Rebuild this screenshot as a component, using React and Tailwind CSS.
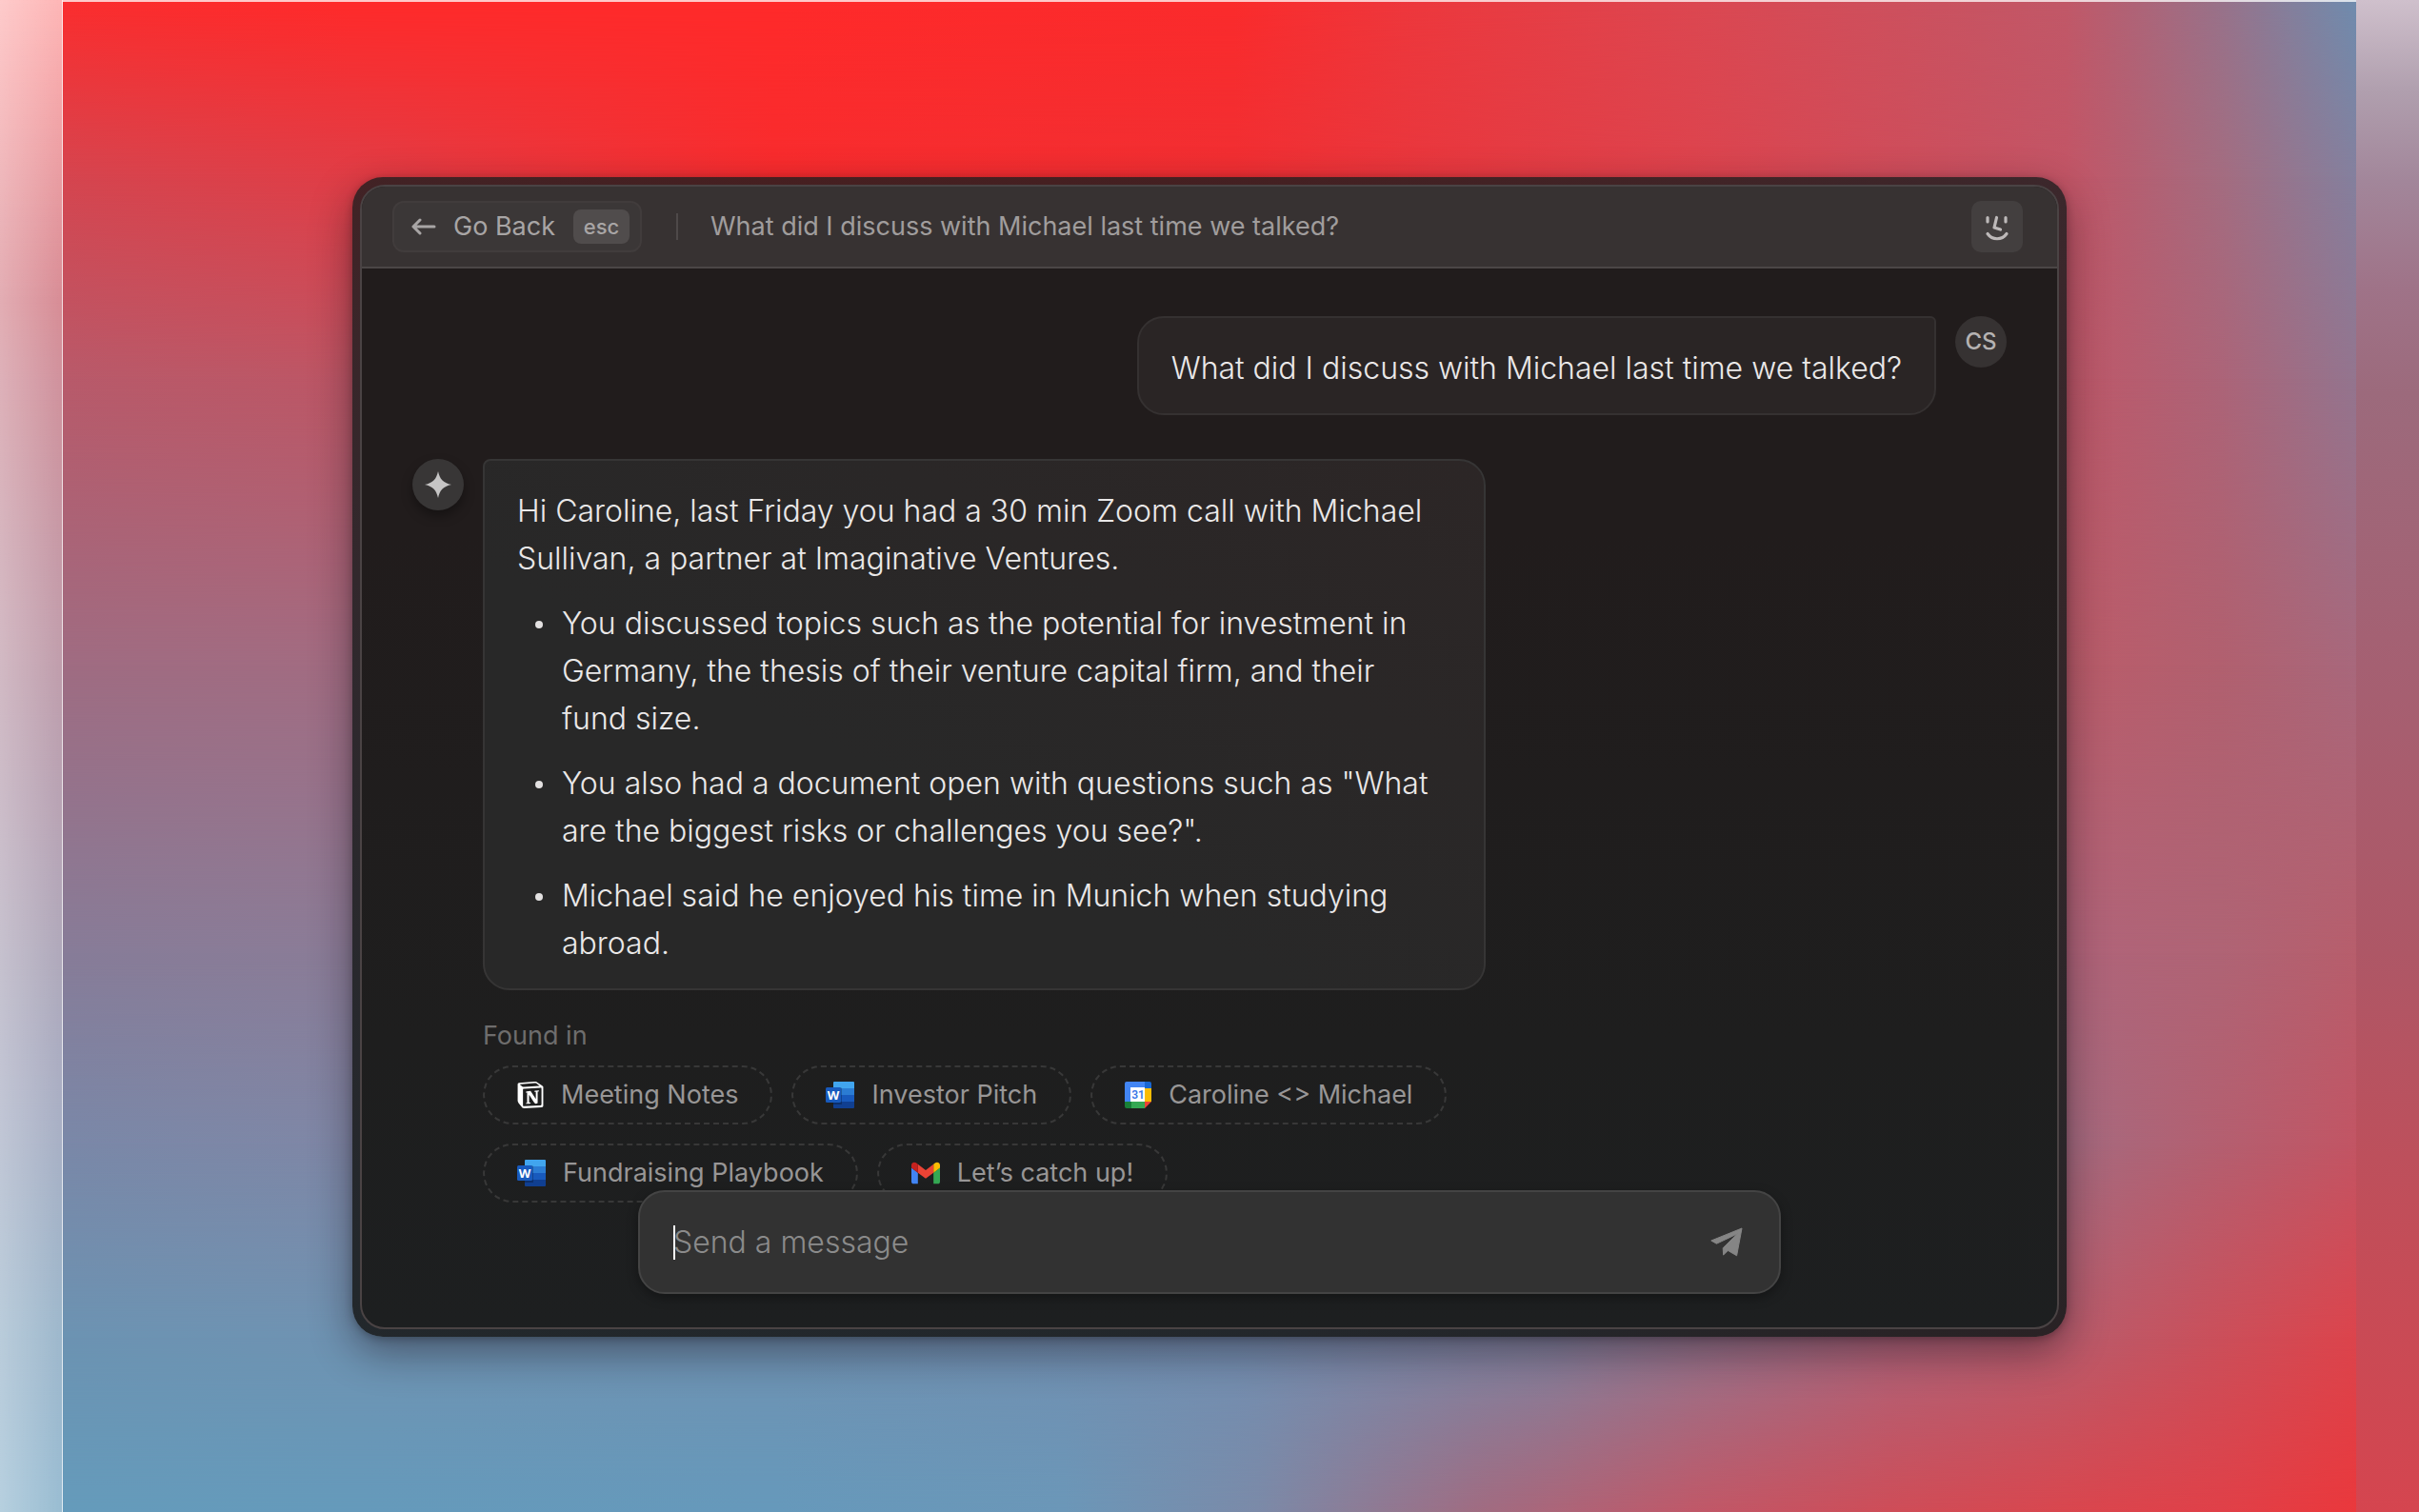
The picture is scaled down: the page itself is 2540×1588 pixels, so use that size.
import { useState } from "react";
import { SiNotion } from "react-icons/si";

const question = "What did I discuss with Michael last time we talked?";

const bullets = [
  "You discussed topics such as the potential for investment in Germany, the thesis of their venture capital firm, and their fund size.",
  'You also had a document open with questions such as "What are the biggest risks or challenges you see?".',
  "Michael said he enjoyed his time in Munich when studying abroad.",
];

const sources = [
  { name: "Meeting Notes", icon: NotionIcon },
  { name: "Investor Pitch", icon: WordIcon },
  { name: "Caroline <> Michael", icon: CalendarIcon },
  { name: "Fundraising Playbook", icon: WordIcon },
  { name: "Let’s catch up!", icon: GmailIcon },
];

function NotionIcon() {
  return <SiNotion className="w-7 h-[30px] text-white" aria-hidden="true" />;
}

function WordIcon() {
  return (
    <svg className="w-[30px] h-7" viewBox="0 0 30 28" aria-hidden="true">
      <path d="M9 0h20a1 1 0 0 1 1 1v6H8V1a1 1 0 0 1 1-1z" fill="#41a5ee" />
      <path d="M8 7h22v7H8z" fill="#2b7cd3" />
      <path d="M8 14h22v7H8z" fill="#185abd" />
      <path d="M8 21h22v6a1 1 0 0 1-1 1H9a1 1 0 0 1-1-1z" fill="#103f91" />
      <path d="M8 6h7.500a1.500 1.500 0 0 1 1.500 1.500V24H8z" fill="#000" opacity="0.25" />
      <rect x="0" y="6" width="16" height="16" rx="1.500" fill="#185abd" />
      <text
        x="8"
        y="19"
        textAnchor="middle"
        fontSize="13"
        fontWeight="700"
        fill="#fff"
        className="font-['Open_Sans',sans-serif]"
      >
        W
      </text>
    </svg>
  );
}

function CalendarIcon() {
  return (
    <svg className="w-7 h-7" viewBox="0 0 28 28" aria-hidden="true">
      <path d="M2 0h19v7H7v14H0V2a2 2 0 0 1 2-2z" fill="#4285f4" />
      <path d="M21 0h5a2 2 0 0 1 2 2v5h-7z" fill="#1967d2" />
      <path d="M21 7h7v14h-7z" fill="#fbbc04" />
      <path d="M7 21h14v7H7z" fill="#34a853" />
      <path d="M0 21h7v7H2a2 2 0 0 1-2-2z" fill="#188038" />
      <path d="M21 21h7l-7 7z" fill="#ea4335" />
      <path d="M6 6h15v15H6z" fill="#fff" />
      <text
        x="14"
        y="18"
        textAnchor="middle"
        fontSize="12"
        fontWeight="600"
        fill="#3b78e7"
        className="font-['Roboto',sans-serif]"
      >
        31
      </text>
    </svg>
  );
}

function GmailIcon() {
  return (
    <svg className="w-[30px] h-6" viewBox="52 42 88 66" aria-hidden="true">
      <path fill="#4285f4" d="M58 108h14V74L52 59v43c0 3.320 2.690 6 6 6" />
      <path fill="#34a853" d="M120 108h14c3.320 0 6-2.690 6-6V59l-20 15" />
      <path fill="#fbbc04" d="M120 48v26l20-15v-8c0-7.420-8.470-11.650-14.400-7.200" />
      <path fill="#ea4335" d="M72 74V48l24 18 24-18v26L96 92" />
      <path fill="#c5221f" d="M52 51v8l20 15V48l-5.600-4.200c-5.940-4.450-14.400-.220-14.400 7.200" />
    </svg>
  );
}

function Backdrop() {
  // each band fades in over the one above it, so the colours blend both ways
  return (
    <div className="absolute inset-0 -z-10" aria-hidden="true">
      <div className="absolute inset-0 bg-[linear-gradient(90deg,#fb2d2e_2.6%,#ff2a2a_14.6%,#ff2a2a_32%,#fb2b2c_51%,#ee373c_58%,#dc4751_70%,#c15868_85.4%,#98728a_91.8%,#6f8cae_97.4%)]" />
      <div className="absolute inset-0 bg-[linear-gradient(90deg,#d5454f_2.6%,#e13d46_14.6%,#f82c2e_32%,#f02f33_51%,#dd434d_70%,#c25566_85.4%,#a46c80_91.8%,#84809e_97.4%)] [mask-image:linear-gradient(to_bottom,transparent_0%,black_11.7%)]" />
      <div className="absolute inset-0 bg-[linear-gradient(90deg,#b85a6a_2.6%,#bd5665_14.6%,#bf5768_85.4%,#ac6478_91.8%,#93758f_97.4%)] [mask-image:linear-gradient(to_bottom,transparent_11.7%,black_25%)]" />
      <div className="absolute inset-0 bg-[linear-gradient(90deg,#9f6c82_2.6%,#a26c82_14.6%,#bb5c6a_85.4%,#b1606f_91.8%,#a8687c_97.4%)] [mask-image:linear-gradient(to_bottom,transparent_25%,black_44%)]" />
      <div className="absolute inset-0 bg-[linear-gradient(90deg,#877c98_2.6%,#8b7c97_14.6%,#b0647a_85.4%,#af6475_91.8%,#b75e6c_97.4%)] [mask-image:linear-gradient(to_bottom,transparent_44%,black_63%)]" />
      <div className="absolute inset-0 bg-[linear-gradient(90deg,#7a88a8_2.6%,#7f87a6_14.6%,#a56b80_85.4%,#b45f70_91.8%,#c25564_97.4%)] [mask-image:linear-gradient(to_bottom,transparent_63%,black_75.6%)]" />
      <div className="absolute inset-0 bg-[linear-gradient(90deg,#6c93b2_2.6%,#6f93b2_14.6%,#6f92b2_32%,#738eb0_51%,#80829f_64%,#94758e_70%,#ad647a_78%,#b85c6c_85.4%,#cb4f5a_91.8%,#dc444c_97.4%)] [mask-image:linear-gradient(to_bottom,transparent_75.6%,black_88.4%)]" />
      <div className="absolute inset-0 bg-[linear-gradient(90deg,#659bbb_2.6%,#659abb_14.6%,#6699bb_32%,#6b97b8_44%,#7b8aa8_52%,#a06c82_61%,#c05868_70%,#ce4d58_78%,#d9464e_85.4%,#e04048_91.8%,#ea383c_97.4%)] [mask-image:linear-gradient(to_bottom,transparent_88.4%,black_100%)]" />
    </div>
  );
}

function Header() {
  return (
    <header className="flex items-center pl-8 pr-9 h-[86px] border-b-2 border-[#4b4646] bg-[#373232] font-normal">
      <button
        type="button"
        className="flex items-center h-[54px] pl-[18px] pr-[11px] rounded-xl border-2 border-[#413c3c] bg-[#3b3737] text-[#a8a5a5]"
      >
        <svg
          className="w-[26px] h-5 mr-[18px]"
          viewBox="0 0 26 20"
          fill="none"
          stroke="currentColor"
          strokeWidth="3"
          strokeLinecap="round"
          strokeLinejoin="round"
          aria-hidden="true"
        >
          <path d="M2 10h22M9 3l-7 7 7 7" />
        </svg>
        <span className="text-[27px] leading-10">Go Back</span>
        <kbd className="flex items-center justify-center ml-[19px] w-[59px] h-9 rounded-lg bg-[#504c4c] font-['Inter',sans-serif] text-[22px] font-medium">
          esc
        </kbd>
      </button>
      <div className="ml-9 w-[2px] h-7 bg-[#4e4949]" />
      <h1 className="ml-[34px] text-[27px] leading-10 text-[#a09d9d]">{question}</h1>
      <button
        type="button"
        aria-label="Assistant"
        className="ml-auto rounded-[10px] bg-[#433f3f] text-[#bdb9b9]"
      >
        <svg
          className="w-[54px] h-[54px]"
          viewBox="10 11 54 54"
          fill="none"
          stroke="currentColor"
          strokeWidth="3.200"
          strokeLinecap="round"
          strokeLinejoin="round"
          aria-hidden="true"
        >
          <path d="M27 28.500v4.500M46 28.500v4.500M36.500 28.500L34 39l6.500 2M27 45.500c5 7 15 7 20 0" />
        </svg>
      </button>
    </header>
  );
}

function Composer() {
  const [message, setMessage] = useState("");

  return (
    <form
      onSubmit={(e) => e.preventDefault()}
      className="absolute inset-x-0 bottom-[35px] mx-auto flex items-center w-full max-w-[1200px] h-[109px] pl-[35px] pr-[38px] rounded-[28px] border-2 border-[#444] bg-[#323232] shadow-[0_4px_12px_rgba(0,0,0,0.35)]"
    >
      <span className="w-[2px] h-9 -mr-[2px] bg-white" aria-hidden="true" />
      <input
        type="text"
        aria-label="Send a message"
        placeholder="Send a message"
        value={message}
        onChange={(e) => setMessage(e.target.value)}
        className="flex-1 h-[50px] bg-transparent caret-transparent text-[32px] font-light text-[#e3e1e1] placeholder:text-[#8b8b8b] focus:outline-none"
      />
      <button type="submit" aria-label="Send" className="text-[#858585]">
        <svg
          className="w-[34px] h-[32px]"
          viewBox="16 20 34 32"
          fill="currentColor"
          stroke="currentColor"
          strokeWidth="1"
          strokeLinejoin="round"
          aria-hidden="true"
        >
          <path d="M16.800 34L49 21l-5.400 28.800-9.200-5.400-4.800 4.600-.400-7.300L44.400 26.800 22.400 37.200z" />
        </svg>
      </button>
    </form>
  );
}

export default function App() {
  return (
    <div className="relative isolate flex min-h-screen font-['Inter',sans-serif] font-light">
      <Backdrop />
      <div className="w-[66px] shrink-0 border-r border-white/60 bg-[linear-gradient(to_right,rgba(255,255,255,0.5),rgba(255,255,255,0.3)),linear-gradient(to_bottom,rgba(255,255,255,0.5),rgba(255,255,255,0.05)_20%)]" />

      <main className="flex flex-1 items-center justify-center border-t-2 border-white/75">
        <div className="w-full max-w-[1800px] rounded-[32px] p-2 bg-[linear-gradient(to_bottom,rgba(26,28,29,0.8),rgba(26,28,29,0.9))] shadow-[0_16px_44px_rgba(20,10,20,0.45),0_2px_8px_rgba(0,0,0,0.25)]">
          <div className="relative overflow-hidden rounded-[26px] border-2 border-[#4a4344] bg-[linear-gradient(to_bottom,#211c1c_30%,#1e1e1e_75%,#1d1f20)]">
            <Header />

            <div className="flex flex-col px-[53px] pt-[50px] pb-[131px]">
              <div className="flex justify-end gap-5">
                <p className="px-[34px] pt-7 pb-[22px] rounded-[28px] rounded-tr-md border-2 border-[#353131] bg-[#2a2525] text-[32px] leading-[50px] text-[#eae8e8]">
                  {question}
                </p>
                <div className="flex items-center justify-center w-[54px] h-[54px] rounded-full bg-[#363232] text-2xl font-medium text-[#b5b2b2]">
                  CS
                </div>
              </div>

              <div className="mt-[46px] flex gap-5">
                <div className="flex items-center justify-center shrink-0 w-[54px] h-[54px] rounded-full bg-[#383636] shadow-[0_6px_12px_rgba(0,0,0,0.35)]">
                  <svg className="w-7 h-7" viewBox="0 0 28 28" fill="#c6c5c5" aria-hidden="true">
                    <path d="M14 0C15.800 8.200 19 12 28 14 19 16 15.800 19.800 14 28 12.200 19.800 9 16 0 14 9 12 12.200 8.200 14 0z" />
                  </svg>
                </div>

                <div>
                  <div className="max-w-[1053px] pl-[34px] pr-12 pt-7 pb-[22px] rounded-[28px] rounded-tl-lg border-2 border-[#363535] bg-[linear-gradient(to_bottom_left,#2c2626,#282828_60%)] text-[32px] leading-[50px] text-[#eae8e8]">
                    <p>
                      Hi Caroline, last Friday you had a 30 min Zoom call with Michael Sullivan, a
                      partner at Imaginative Ventures.
                    </p>
                    <ul>
                      {bullets.map((text) => (
                        <li key={text} className="mt-[18px] flex gap-5 pl-[19px]">
                          <span className="mt-[22px] w-2 h-2 shrink-0 rounded-full bg-[#e3e1e1]" />
                          <span>{text}</span>
                        </li>
                      ))}
                    </ul>
                  </div>

                  <h2 className="mt-7 text-[27px] leading-10 font-normal text-[#6e6d6d]">
                    Found in
                  </h2>
                  <div className="mt-[11px] flex flex-wrap gap-5 max-w-[1053px]">
                    {sources.map(({ name, icon: Icon }) => (
                      <a
                        key={name}
                        href="#"
                        className="flex items-center gap-[18px] h-[62px] px-[34px] rounded-full border-2 border-dashed border-[#383838] text-[27px] leading-10 font-normal text-[#989696]"
                      >
                        <Icon />
                        {name}
                      </a>
                    ))}
                  </div>
                </div>
              </div>
            </div>

            <Composer />
          </div>
        </div>
      </main>

      <div className="w-[66px] shrink-0 bg-[linear-gradient(to_bottom,#cfc0cc,#b09fae_6%,#a2869a_12%,#9f7388_19%,#9c6a7c_26%,#a56072_44%,#ae5766_63%,#c34d58_82%,#d5454f)]" />
    </div>
  );
}
